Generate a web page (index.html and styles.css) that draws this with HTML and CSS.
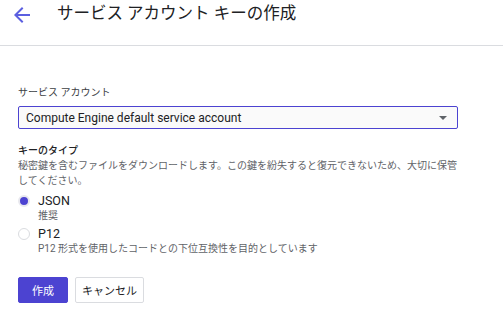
FILE: index.html
```html
<!doctype html>
<html>
  <head>
    <title>サービス アカウント キーの作成</title>
    <meta charset='utf-8'>
    <meta name='viewport' content='width=device-width, initial-scale=1'>
    <link rel="stylesheet" href="styles.css">
  </head>
  <body>
    <header class='hd-bar'>
      <a class='hd-back' href='#'>
        <svg width='24' height='24' viewBox='0 0 24 24'><path d='M20 11H7.83l5.59-5.59L12 4l-8 8 8 8 1.41-1.41L7.83 13H20v-2z'/></svg>
      </a>
      <h1 class='hd-title'>サービス アカウント キーの作成</h1>
    </header>
    <main class='fm-form'>
      <label class='fm-label'>サービス アカウント</label>
      <div class='fm-select'>
        <span>Compute Engine default service account</span>
        <span class='fm-caret'></span>
      </div>
      <div class='fm-group'>
        <div class='fm-heading'>キーのタイプ</div>
        <div class='fm-hint'>秘密鍵を含むファイルをダウンロードします。この鍵を紛失すると復元できないため、大切に保管してください。</div>
      </div>
      <div class='rd-list'>
        <div class='rd-option'>
          <span class='rd-circle rd-checked'></span>
          <span class='rd-label'>JSON</span>
          <span class='rd-hint'>推奨</span>
        </div>
        <div class='rd-option'>
          <span class='rd-circle'></span>
          <span class='rd-label'>P12</span>
          <span class='rd-hint'>P12 形式を使用したコードとの下位互換性を目的としています</span>
        </div>
      </div>
      <div class='bt-row'>
        <button class='bt bt-primary'>作成</button>
        <button class='bt bt-plain'>キャンセル</button>
      </div>
    </main>
  </body>
</html>
```

FILE: styles.css
```css
body {
  margin: 0;
  background-color: #fff;
  color: #202124;
  font-family: Roboto, 'Noto Sans CJK JP', sans-serif;
}
.hd-bar {
  display: flex;
  align-items: center;
  height: 28px;
  padding: 0 0 17px 10px;
  border-bottom: 1px solid #dadce0;
}
.hd-back {
  display: flex;
  fill: #5b5fe0;
  margin-top: 2px;
}
.hd-title {
  margin: 0 0 0 23px;
  font-size: 16.5px;
  font-weight: 400;
  line-height: 28px;
  color: #202124;
}
.fm-form {
  display: flex;
  flex-direction: column;
  width: 440px;
  padding: 40px 18px 0;
}
.fm-label {
  font-size: 10px;
  line-height: 14px;
  color: #3c4043;
}
.fm-select {
  display: flex;
  align-items: center;
  justify-content: space-between;
  height: 21px;
  margin-top: 6px;
  padding: 0 10px 0 7px;
  border: 1px solid #4c43d1;
  border-radius: 2px;
  background-color: #fafafa;
  font-size: 12px;
  color: #202124;
}
.fm-caret {
  border-left: 4px solid transparent;
  border-right: 4px solid transparent;
  border-top: 4px solid #5f6368;
}
.fm-group {
  margin-top: 14px;
}
.fm-heading {
  font-size: 10px;
  font-weight: 500;
  line-height: 15px;
  color: #202124;
}
.fm-hint {
  font-size: 10px;
  line-height: 15px;
  color: #5f6368;
}
.rd-list {
  display: flex;
  flex-direction: column;
  gap: 3px;
  margin-top: 5px;
}
.rd-option {
  display: grid;
  grid-template-columns: 20px auto;
  align-items: center;
}
.rd-circle {
  box-sizing: border-box;
  width: 12px;
  height: 12px;
  border: 1px solid #dadce0;
  border-radius: 50%;
  background-color: #fff;
}
.rd-checked {
  border: 2px solid #e8e8ee;
  background-color: #4c43d1;
}
.rd-label {
  font-size: 12.5px;
  line-height: 15px;
  color: #202124;
}
.rd-hint {
  grid-column: 2;
  font-size: 10px;
  line-height: 15px;
  color: #5f6368;
}
.bt-row {
  display: flex;
  gap: 7px;
  margin-top: 21px;
}
.bt {
  height: 26px;
  padding: 0;
  border-radius: 2px;
  font-family: Roboto, 'Noto Sans CJK JP', sans-serif;
  font-size: 11px;
  cursor: pointer;
}
.bt-primary {
  width: 50px;
  border: 1px solid #4c43d1;
  background-color: #4c43d1;
  color: #fff;
}
.bt-plain {
  width: 69px;
  border: 1px solid #dadce0;
  background-color: #fff;
  color: #202124;
}
```
